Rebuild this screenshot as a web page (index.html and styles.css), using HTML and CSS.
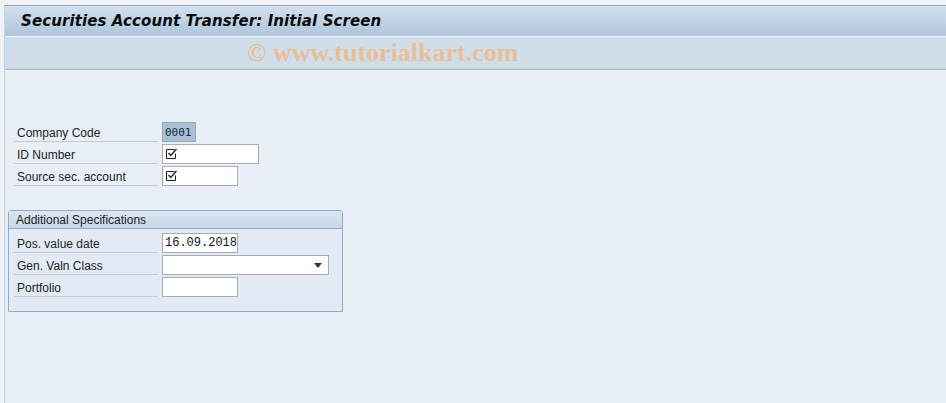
FILE: index.html
```html
<!DOCTYPE html>
<html lang="en">
<head>
<meta charset="UTF-8" />
<title>Securities Account Transfer: Initial Screen</title>
<link rel="stylesheet" href="styles.css">
</head>
<body>

<div class="frame">
  <div class="titlebar">
    <h1>Securities Account Transfer: Initial Screen</h1>
  </div>
  <div class="toolbar">
    <span class="watermark">&copy; www.tutorialkart.com</span>
  </div>

  <div class="content">
    <div class="row">
      <label>Company Code</label>
      <span class="field selected">0001</span>
    </div>
    <div class="row">
      <label>ID Number</label>
      <span class="field w96"><svg class="req" width="11" height="11" viewBox="0 0 11 11"><path d="M8.5 1.5H0.5V10.5H9.5V5.5" fill="none" stroke="#222" stroke-width="1"/><path d="M2.5 5l2.2 2.5L10.5 1" fill="none" stroke="#222" stroke-width="1.4"/></svg></span>
    </div>
    <div class="row">
      <label>Source sec. account</label>
      <span class="field w75"><svg class="req" width="11" height="11" viewBox="0 0 11 11"><path d="M8.5 1.5H0.5V10.5H9.5V5.5" fill="none" stroke="#222" stroke-width="1"/><path d="M2.5 5l2.2 2.5L10.5 1" fill="none" stroke="#222" stroke-width="1.4"/></svg></span>
    </div>

    <div class="group">
      <div class="group-head">Additional Specifications</div>
      <div class="group-body">
        <div class="row">
          <label>Pos. value date</label>
          <span class="field w75 mono">16.09.2018</span>
        </div>
        <div class="row">
          <label>Gen. Valn Class</label>
          <span class="field w166 dropdown"><span class="arrow"></span></span>
        </div>
        <div class="row">
          <label>Portfolio</label>
          <span class="field w75"></span>
        </div>
      </div>
    </div>
  </div>
</div>

</body>
</html>
```

FILE: styles.css
```css
html, body {
  margin: 0;
  height: 100%;
}
body {
  background: #eff2f6;
  font-family: "Liberation Sans", Arial, sans-serif;
  font-size: 12px;
  color: #222;
  padding: 5px 0 0 4px;
  box-sizing: border-box;
  overflow: hidden;
}
.frame {
  height: 100%;
  border-top: 1px solid #9ba6b6;
  border-left: 1px solid #c9d2de;
  background: #e8eff7;
}
.titlebar {
  height: 30px;
  background: linear-gradient(#d3e1ed, #aec5dc);
  border-bottom: 1px solid #f4f8fb;
  display: flex;
  align-items: center;
  padding-left: 16px;
}
.titlebar h1 {
  margin: 0;
  font-family: "DejaVu Sans", Verdana, sans-serif;
  font-size: 15px;
  font-weight: bold;
  font-style: italic;
  color: #0b0b0b;
  letter-spacing: 0.1px;
}
.toolbar {
  height: 32px;
  background: #cfdde8;
  border-bottom: 1px solid #a7b4c2;
  display: flex;
  align-items: center;
}
.watermark {
  margin-left: 242px;
  font-family: "Liberation Serif", "Times New Roman", serif;
  font-weight: bold;
  font-size: 26px;
  color: #e9be96;
}
.content {
  padding: 52px 0 0 2px;
}
.row {
  display: flex;
  align-items: stretch;
  height: 20px;
  margin-bottom: 2px;
}
.row label {
  width: 141px;
  margin: 0 4px 0 7px;
  padding: 2px 0 0 3px;
  border-bottom: 1px solid #c3cad3;
  display: flex;
  align-items: center;
  line-height: 1;
}
.field {
  box-sizing: border-box;
  height: 20px;
  background: #fff;
  border: 1px solid #a9adb3;
  display: flex;
  align-items: center;
  padding-left: 3px;
  position: relative;
}
.field.selected {
  width: 34px;
  background: #a9bfd8;
  border-color: #9ea9b6;
  font-family: "DejaVu Sans Mono", monospace;
  font-size: 11px;
  color: #1b2a3c;
  padding-left: 2px;
}
.w96 { width: 97px; }
.w75 { width: 76px; }
.w166 { width: 167px; }
.mono {
  font-family: "Liberation Mono", "Courier New", monospace;
  font-size: 12px;
  color: #111;
  padding-left: 2px;
}
.req {
  display: block;
  margin-top: -1px;
}
.arrow {
  position: absolute;
  right: 6px;
  top: 7px;
  width: 0;
  height: 0;
  border-left: 4px solid transparent;
  border-right: 4px solid transparent;
  border-top: 5px solid #24375a;
}
.group {
  width: 333px;
  margin: 24px 0 0 1px;
  border: 1px solid #8eabcc;
  border-radius: 3px 3px 0 0;
  background: #e2ebf5;
  height: 100px;
}
.group-head {
  height: 17px;
  background: linear-gradient(#dbe6f1, #c6d7e8);
  border-bottom: 1px solid #8eabcc;
  display: flex;
  align-items: center;
  padding-left: 7px;
}
.group-body {
  padding-top: 4px;
  margin-left: -2px;
}
```
